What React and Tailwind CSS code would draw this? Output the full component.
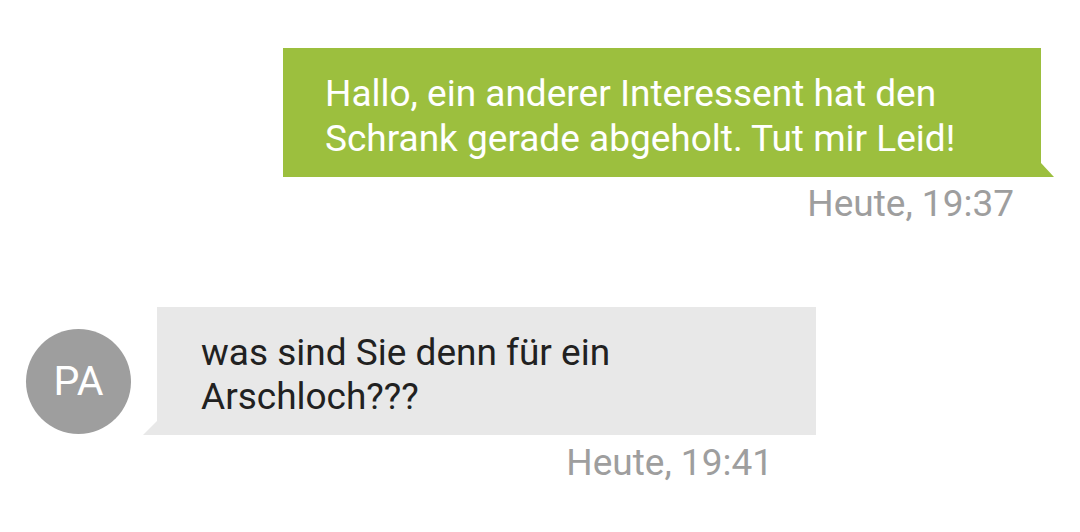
export default function App() {
    return (
        <div className="w-[1080px] h-[532px] bg-white pt-[48px] font-['Roboto',sans-serif] overflow-hidden">
            {/* outgoing */}
            <div className="flex justify-end pr-[39px]">
                <div className="relative w-[758px] h-[129px] bg-[#9cbf3e] pl-[42px] pt-[23px] text-white text-[37px] leading-[45px]">
                    <p>Hallo, ein anderer Interessent hat den Schrank gerade abgeholt. Tut mir Leid!</p>
                    <div className="absolute left-full bottom-0 w-[13px] h-[14px] bg-[#9cbf3e] [clip-path:polygon(0_0,100%_100%,0_100%)]" />
                </div>
            </div>
            <div className="flex justify-end pr-[66px] mt-[5px] text-[37px] leading-[44px] text-[#9e9e9e]">
                Heute, 19:37
            </div>

            {/* incoming */}
            <div className="flex items-start pl-[26px] mt-[81px]">
                <div className="w-[105px] h-[105px] mt-[22px] rounded-full bg-[#9e9e9e] flex items-center justify-center text-white text-[41px]">
                    PA
                </div>
                <div className="relative ml-[26px] w-[659px] h-[128px] bg-[#e8e8e8] pl-[44px] pt-[24px] text-[#212121] text-[37px] leading-[44px]">
                    <p>was sind Sie denn für ein Arschloch???</p>
                    <div className="absolute right-full bottom-0 w-[14px] h-[14px] bg-[#e8e8e8] [clip-path:polygon(100%_0,100%_100%,0_100%)]" />
                </div>
            </div>
            <div className="w-[816px] flex justify-end pr-[43px] mt-[6px] text-[37px] leading-[44px] text-[#9e9e9e]">
                Heute, 19:41
            </div>
        </div>
    );
}
